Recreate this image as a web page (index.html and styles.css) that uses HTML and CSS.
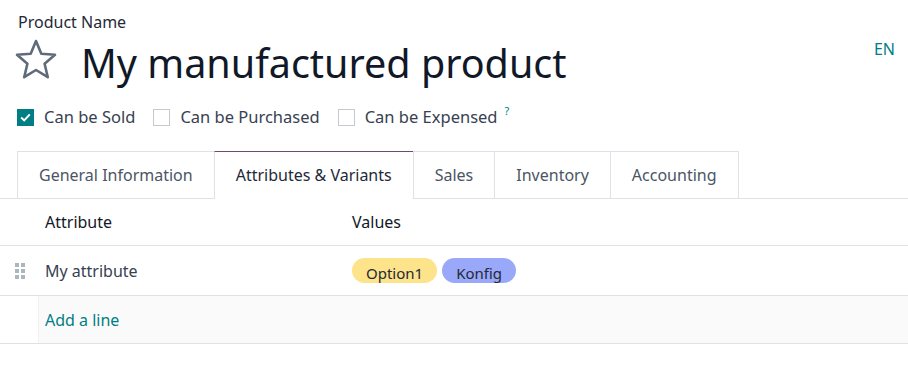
FILE: index.html
```html
<!DOCTYPE html>
<html lang="en">
<head>
    <meta charset="UTF-8">
    <title>My manufactured product</title>
    <link rel="stylesheet" href="styles.css">
</head>
<body>
    <div class="sheet">
        <div class="title-block">
            <label class="field-label">Product Name</label>
            <div class="title-row">
                <svg class="star" width="42" height="40" viewBox="-1 0 42 40">
                    <polygon points="20,2 25.3,14.7 39,15.8 28.6,24.8 31.8,38.2 20,31 8.2,38.2 11.4,24.8 1,15.8 14.7,14.7" fill="none" stroke="#5f6b7a" stroke-width="2.6" stroke-linejoin="round"/>
                </svg>
                <h1 class="title">My manufactured product</h1>
            </div>
            <span class="lang">EN</span>
        </div>

        <div class="checks">
            <label class="check">
                <span class="box checked">
                    <svg width="11" height="9" viewBox="0 0 11 9"><path d="M1.2 4.6 L4.2 7.4 L9.8 1.4" fill="none" stroke="#fff" stroke-width="2"/></svg>
                </span>
                Can be Sold
            </label>
            <label class="check"><span class="box"></span>Can be Purchased</label>
            <label class="check"><span class="box"></span>Can be Expensed<sup class="help">?</sup></label>
        </div>

        <div class="tabs">
            <div class="tab">General Information</div>
            <div class="tab active">Attributes &amp; Variants</div>
            <div class="tab">Sales</div>
            <div class="tab">Inventory</div>
            <div class="tab">Accounting</div>
        </div>

        <div class="list">
            <div class="row head">
                <div class="handle-cell"></div>
                <div class="cell attr">Attribute</div>
                <div class="cell vals">Values</div>
            </div>
            <div class="row">
                <div class="handle-cell">
                    <svg width="10" height="16" viewBox="0 0 10 16">
                        <rect x="0" y="0" width="4" height="4" fill="#adb5bd"/>
                        <rect x="6" y="0" width="4" height="4" fill="#adb5bd"/>
                        <rect x="0" y="6" width="4" height="4" fill="#adb5bd"/>
                        <rect x="6" y="6" width="4" height="4" fill="#adb5bd"/>
                        <rect x="0" y="12" width="4" height="4" fill="#adb5bd"/>
                        <rect x="6" y="12" width="4" height="4" fill="#adb5bd"/>
                    </svg>
                </div>
                <div class="cell attr value">My attribute</div>
                <div class="cell vals">
                    <span class="badge yellow">Option1</span>
                    <span class="badge blue">Konfig</span>
                </div>
            </div>
            <div class="row add">
                <div class="handle-cell"></div>
                <div class="cell add-cell"><a href="#" class="add-link">Add a line</a></div>
            </div>
        </div>
    </div>
</body>
</html>
```

FILE: styles.css
```css
body {
    margin: 0;
    font-family: 'Noto Sans', sans-serif;
    color: #374151;
    background-color: white;
}

.title-block {
    position: relative;
    padding: 10px 17px 0 15px;
}

.field-label {
    display: block;
    font-size: 16px;
    color: #1f2937;
    line-height: 24px;
    padding-left: 3px;
}

.title-row {
    display: flex;
    align-items: center;
    gap: 24px;
    margin-top: 4px;
    height: 48px;
}

.star {
    align-self: flex-start;
    margin-top: 1px;
}

.title {
    margin: 0;
    font-size: 39.5px;
    font-weight: 400;
    line-height: 48px;
    color: #111827;
    padding-top: 2px;
}

.lang {
    position: absolute;
    right: 13px;
    top: 38px;
    font-size: 16px;
    color: #017e84;
}

.checks {
    display: flex;
    gap: 18px;
    padding: 19px 17px 0 17px;
}

.check {
    display: flex;
    align-items: center;
    gap: 10px;
    font-size: 16.5px;
    line-height: 24px;
    color: #374151;
}

.box {
    width: 17px;
    height: 17px;
    box-sizing: border-box;
    border: 1px solid #c5c9ce;
    display: flex;
    align-items: center;
    justify-content: center;
}

.box.checked {
    background-color: #017e84;
    border-color: #017e84;
}

.help {
    color: #017e84;
    font-size: 11px;
    margin-left: -3px;
    align-self: flex-start;
    line-height: 12px;
}

.tabs {
    display: flex;
    margin-top: 22px;
    padding-left: 17px;
    border-bottom: 1px solid #dee2e6;
}

.tab {
    padding: 0 21px;
    height: 46px;
    line-height: 46px;
    font-size: 16px;
    color: #4b5563;
    border: 1px solid #dee2e6;
    border-bottom: none;
    margin-left: -1px;
}

.tab:first-child {
    margin-left: 0;
}

.tab.active {
    color: #1f2937;
    border-top-color: #714b67;
    background-color: white;
    margin-bottom: -1px;
    height: 47px;
}

.row {
    display: flex;
    align-items: center;
    border-bottom: 1px solid #dee2e6;
    height: 49px;
    font-size: 16px;
}

.row.head {
    height: 46px;
    color: #111827;
}

.handle-cell {
    width: 38px;
    display: flex;
    justify-content: center;
    align-self: stretch;
    align-items: center;
    padding-left: 2px;
    box-sizing: border-box;
}

.cell {
    padding-left: 7px;
}

.attr {
    width: 300px;
}

.value {
    color: #374151;
}

.vals {
    display: flex;
    gap: 5px;
}

.badge {
    display: inline-block;
    height: 25px;
    line-height: 31px;
    overflow: hidden;
    border-radius: 13px;
    padding: 0 14px;
    font-size: 15px;
    color: #1f2937;
}

.badge.yellow {
    background-color: #fde38a;
}

.badge.blue {
    background-color: #99a8f8;
}

.row.add {
    height: 47px;
    align-items: stretch;
}

.add-cell {
    flex: 1;
    display: flex;
    align-items: center;
    background-color: #fafafa;
    border-left: 1px solid #f0f0f0;
    padding-left: 6px;
}

.add-link {
    color: #017e84;
    text-decoration: none;
    font-size: 16px;
}
```
